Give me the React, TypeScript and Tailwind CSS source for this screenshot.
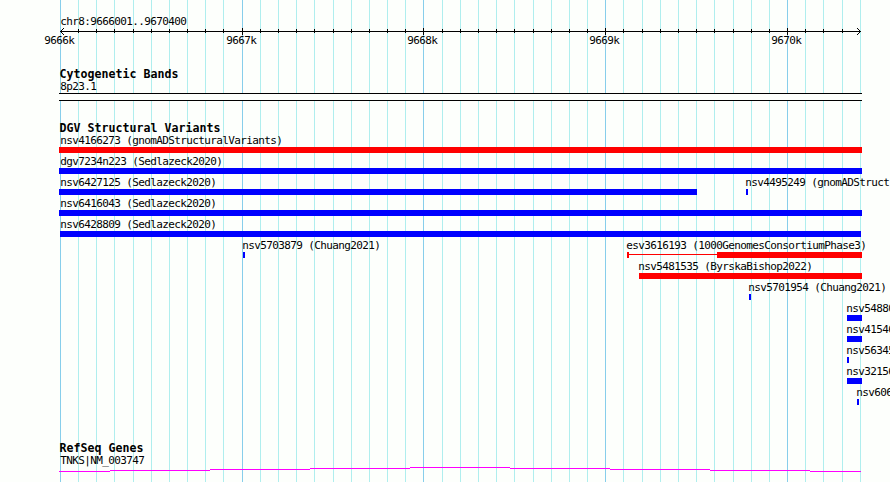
const majorLines = [60, 242, 423, 605, 787];

const minorLines = [
  78, 96, 114, 133, 151, 169, 187, 205, 223, 260, 278, 296, 314, 333, 351, 369, 387, 405, 442, 460,
  478, 496, 514, 533, 551, 569, 587, 623, 642, 660, 678, 696, 714, 733, 751, 769, 805, 823, 842, 860,
];

const scaleLabels = ["9666k", "9667k", "9668k", "9669k", "9670k"];

type Feature = {
  label: string;
  start: number;
  end: number;
  color: string;
  // thin connector drawn before the solid part
  thickStart?: number;
};

const gain = "#0000ff";
const loss = "#ff0000";

const variantRows: Feature[][] = [
  [{ label: "nsv4166273 (gnomADStructuralVariants)", start: 59, end: 862, color: loss }],
  [{ label: "dgv7234n223 (Sedlazeck2020)", start: 59, end: 862, color: gain }],
  [
    { label: "nsv6427125 (Sedlazeck2020)", start: 59, end: 697, color: gain },
    { label: "nsv4495249 (gnomADStruct", start: 746, end: 748, color: gain },
  ],
  [{ label: "nsv6416043 (Sedlazeck2020)", start: 59, end: 862, color: gain }],
  [{ label: "nsv6428809 (Sedlazeck2020)", start: 60, end: 861, color: gain }],
  [
    { label: "nsv5703879 (Chuang2021)", start: 243, end: 245, color: gain },
    {
      label: "esv3616193 (1000GenomesConsortiumPhase3)",
      start: 627,
      end: 862,
      color: loss,
      thickStart: 717,
    },
  ],
  [{ label: "nsv5481535 (ByrskaBishop2022)", start: 639, end: 862, color: loss }],
  [{ label: "nsv5701954 (Chuang2021)", start: 749, end: 751, color: gain }],
  [{ label: "nsv54880", start: 847, end: 862, color: gain }],
  [{ label: "nsv41546", start: 847, end: 862, color: gain }],
  [{ label: "nsv56345", start: 847, end: 849, color: gain }],
  [{ label: "nsv32156", start: 847, end: 862, color: gain }],
  [{ label: "nsv606", start: 857, end: 859, color: gain }],
];

const labelText = "whitespace-pre text-[11px] leading-[12px] tracking-[-0.622px]";

function GridLines() {
  return (
    <svg
      aria-hidden="true"
      className="pointer-events-none absolute inset-0"
      width="890"
      height="482"
      shapeRendering="crispEdges"
    >
      {minorLines.map((x) => (
        <rect key={x} x={x} y="0" width="1" height="482" fill="#afeeee" />
      ))}
      {majorLines.map((x) => (
        <rect key={x} x={x} y="0" width="1" height="482" fill="#87ceeb" />
      ))}
    </svg>
  );
}

function Ruler() {
  return (
    <svg className="block" width="890" height="68" shapeRendering="crispEdges">
      <text className={labelText} x="60.3" y="25">
        chr8:9666001..9670400
      </text>
      <rect x="60" y="31" width="801" height="1" />
      {minorLines.slice(0, -1).map((x) => (
        <rect key={x} x={x} y="29" width="1" height="4" />
      ))}
      {majorLines.slice(1).map((x) => (
        <rect key={x} x={x} y="28" width="1" height="7" />
      ))}
      <path d="M61 30h1v1h-1zM62 29h1v1h-1zM63 28h1v1h-1zM61 32h1v1h-1zM62 33h1v1h-1zM63 34h1v1h-1z" />
      <path d="M859 30h1v1h-1zM858 29h1v1h-1zM857 28h1v1h-1zM859 32h1v1h-1zM858 33h1v1h-1zM857 34h1v1h-1z" />
      {scaleLabels.map((label, i) => (
        <text key={label} className={labelText} x={majorLines[i] - 15.8} y="44">
          {label}
        </text>
      ))}
    </svg>
  );
}

function TrackTitle({ children }: { children: string }) {
  return (
    <h2 className="whitespace-pre pl-[59.5px] text-[11.6px] font-bold leading-[13px] tracking-[0.016px]">
      {children}
    </h2>
  );
}

function FeatureGlyph({ feature }: { feature: Feature }) {
  const { label, start, end, thickStart, color } = feature;
  const solidStart = thickStart ?? start;

  return (
    <g fill={color}>
      <text className={labelText} x={Math.max(start - 0.7, 60.3)} y="9" fill="#000000">
        {label}
      </text>
      {thickStart && (
        <>
          <rect x={start} y="12" width="2" height="6" />
          <rect x={start} y="14" width={thickStart - start} height="1" />
        </>
      )}
      <rect x={solidStart} y="12" width={end - solidStart} height="6" />
    </g>
  );
}

export default function App() {
  return (
    <main className="relative h-[482px] w-[890px] overflow-hidden bg-[#fdfffc] font-['DejaVu_Sans_Mono',monospace] text-black">
      <GridLines />
      <div className="relative flex flex-col">
        <Ruler />

        <section className="flex h-[54px] flex-col">
          <TrackTitle>Cytogenetic Bands</TrackTitle>
          <p className={`${labelText} pl-[60.3px]`}>8p23.1</p>
          <div className="ml-[59px] h-2 w-[803px] border-y border-black bg-[#fdfffc]" />
        </section>

        <section className="flex h-80 flex-col">
          <TrackTitle>DGV Structural Variants</TrackTitle>
          {variantRows.map((row) => (
            <svg
              key={row[0].label}
              className="block"
              width="890"
              height="21"
              shapeRendering="crispEdges"
            >
              {row.map((feature) => (
                <FeatureGlyph key={feature.label} feature={feature} />
              ))}
            </svg>
          ))}
        </section>

        <section className="flex flex-col">
          <TrackTitle>RefSeq Genes</TrackTitle>
          <p className={`${labelText} pl-[60.3px]`}>TNKS|NM_003747</p>
          <svg className="block" width="890" height="15" shapeRendering="crispEdges">
            <path
              d="M59 4.5H110M110 3.5H210M210 2.5H310M310 1.5H410M410 .5H510M510 1.5H610M610 2.5H710M710 3.5H810M810 4.5H861"
              stroke="#ff00ff"
              fill="none"
            />
          </svg>
        </section>
      </div>
    </main>
  );
}
